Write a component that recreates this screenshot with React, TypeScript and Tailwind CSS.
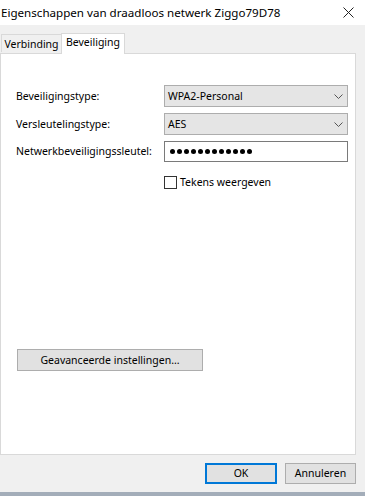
import React from 'react'

const font = { fontFamily: '"Noto Sans", "Open Sans", sans-serif' }

function Chevron() {
  return (
    <svg width="9" height="5" viewBox="0 0 9 5" className="shrink-0">
      <path d="M0.5 0.5 L4.5 4.5 L8.5 0.5" fill="none" stroke="#555" strokeWidth="1" />
    </svg>
  )
}

function Select({ value }: { value: string }) {
  return (
    <div className="flex items-center justify-between w-[184px] h-[22px] bg-[#e5e5e5] border border-[#adadad] pl-[3px] pr-[4px]">
      <span className="text-[10.5px] leading-none text-black">{value}</span>
      <Chevron />
    </div>
  )
}

export default function App() {
  return (
    <div className="w-[365px] h-[496px] flex flex-col bg-[#f0f0f0] overflow-hidden text-black" style={font}>
      {/* Title bar */}
      <div className="h-[25px] bg-white flex items-center justify-between shrink-0 pl-[1px] pr-[11px]">
        <span className="text-[11.6px] leading-none">Eigenschappen van draadloos netwerk Ziggo79D78</span>
        <svg width="11" height="11" viewBox="0 0 11 11">
          <path d="M0.5 0.5 L10.5 10.5 M10.5 0.5 L0.5 10.5" stroke="#222" strokeWidth="1" />
        </svg>
      </div>

      {/* Tabs */}
      <div className="h-[28px] flex items-end pl-[1px] shrink-0">
        <div className="h-[18px] w-[60px] border border-b-0 border-r-0 border-[#d9d9d9] flex items-center justify-center text-[10.5px] leading-none mb-[1px] pt-[2px]">
          Verbinding
        </div>
        <div className="h-[21px] w-[64px] bg-white border border-b-0 border-[#d9d9d9] flex items-center justify-center text-[10.5px] leading-none -mb-[1px] relative z-10 pb-[3px]">
          Beveiliging
        </div>
      </div>

      {/* Panel */}
      <div className="w-[356px] h-[402px] bg-white border border-[#d9d9d9] shrink-0 flex flex-col pl-[15px] pt-[31px]">
        <div className="flex items-center">
          <span className="w-[148px] text-[10.5px] leading-none">Beveiligingstype:</span>
          <Select value="WPA2-Personal" />
        </div>
        <div className="flex items-center mt-[6px]">
          <span className="w-[148px] text-[10.5px] leading-none">Versleutelingstype:</span>
          <Select value="AES" />
        </div>
        <div className="flex items-center mt-[6px]">
          <span className="w-[148px] text-[10.5px] leading-none">Netwerkbeveiligingssleutel:</span>
          <div className="w-[184px] h-[21px] border border-[#7a7a7a] bg-white flex items-center gap-[2px] pl-[5px]">
            {Array.from({ length: 12 }).map((_, i) => (
              <span key={i} className="w-[5px] h-[5px] rounded-full bg-black" />
            ))}
          </div>
        </div>
        <div className="flex items-center mt-[14px] pl-[148px] gap-[3px]">
          <span className="w-[13px] h-[13px] border border-[#333] bg-white" />
          <span className="text-[10.5px] leading-none">Tekens weergeven</span>
        </div>

        <div className="mt-[160px] ml-[1px] w-[186px] h-[22px] bg-[#e1e1e1] border border-[#adadad] flex items-center justify-center text-[10.5px] leading-none">
          Geavanceerde instellingen...
        </div>
      </div>

      {/* Footer */}
      <div className="flex-1 flex justify-end items-start gap-[8px] pt-[8px] pr-[9px]">
        <div className="w-[72px] h-[21px] bg-[#e1e1e1] border-2 border-[#0078d7] flex items-center justify-center text-[10.5px] leading-none">
          OK
        </div>
        <div className="w-[71px] h-[21px] bg-[#e1e1e1] border border-[#adadad] flex items-center justify-center text-[10.5px] leading-none">
          Annuleren
        </div>
      </div>
      <div className="h-[4px] bg-[#a3adb9] shrink-0" />
    </div>
  )
}
